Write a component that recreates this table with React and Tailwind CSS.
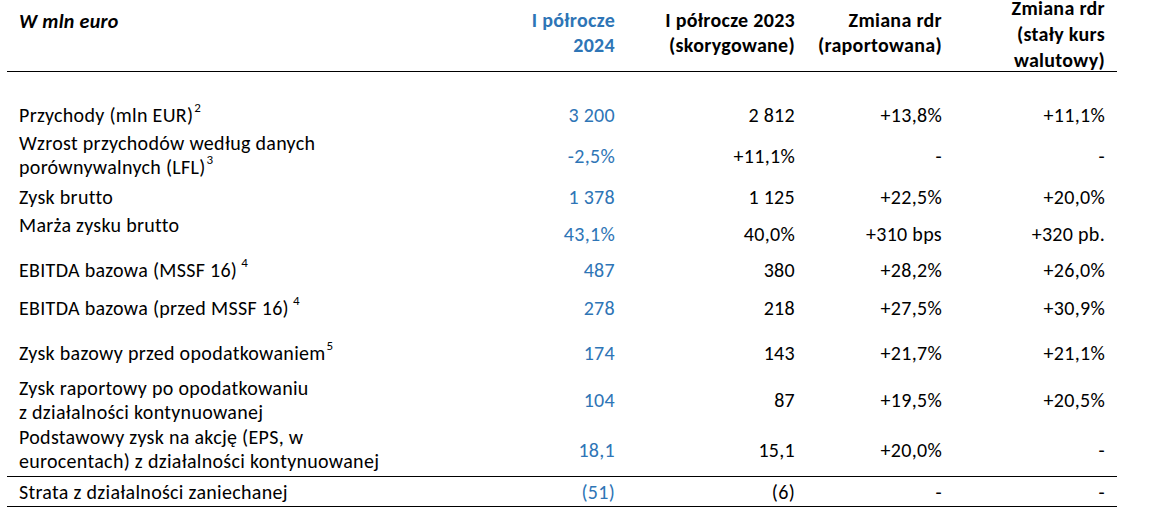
import React from "react";

const rows = [
  { label: ["Przychody (mln EUR)", "2", false], h: 28, vo: 0, v: ["3 200", "2 812", "+13,8%", "+11,1%"] },
  { label: ["Wzrost przychodów według danych", null], label2: ["porównywalnych (LFL)", "3", false], h: 54, vo: 13, v: ["-2,5%", "+11,1%", "-", "-"] },
  { label: ["Zysk brutto", null], h: 28, vo: 0, v: ["1 378", "1 125", "+22,5%", "+20,0%"] },
  { label: ["Marża zysku brutto", null], h: 45, vo: 9, v: ["43,1%", "40,0%", "+310 bps", "+320 pb."] },
  { label: ["EBITDA bazowa (MSSF 16)", "4", true], h: 38, vo: 0, v: ["487", "380", "+28,2%", "+26,0%"] },
  { label: ["EBITDA bazowa (przed MSSF 16)", "4", true], h: 45, vo: 0, v: ["278", "218", "+27,5%", "+30,9%"] },
  { label: ["Zysk bazowy przed opodatkowaniem", "5", false], h: 35, vo: 0, v: ["174", "143", "+21,7%", "+21,1%"] },
  { label: ["Zysk raportowy po opodatkowaniu", null], label2: ["z działalności kontynuowanej", null], h: 49, vo: 12, v: ["104", "87", "+19,5%", "+20,5%"] },
  { label: ["Podstawowy zysk na akcję (EPS, w", null], label2: ["eurocentach) z działalności kontynuowanej", null], h: 51, vo: 13, v: ["18,1", "15,1", "+20,0%", "-"] },
];

const cols = "grid grid-cols-[453px_167px_180px_147px_163px]";

function Label({ parts }) {
  const [text, sup, space] = parts;
  return (
    <div className="whitespace-nowrap">
      {text}
      {sup && (
        <sup className={`text-[13px] leading-none tracking-normal relative top-[-2px] align-super ${space ? "ml-[4px]" : "ml-[1px]"}`}>{sup}</sup>
      )}
    </div>
  );
}

function Row({ r }) {
  return (
    <div className={cols} style={{ height: r.h }}>
      <div className="pl-[12px]">
        <Label parts={r.label} />
        {r.label2 && <Label parts={r.label2} />}
      </div>
      {r.v.map((val, i) => (
        <div
          key={i}
          className={`pr-[12px] text-right whitespace-nowrap ${i === 0 ? "text-[#2E75B6]" : "text-black"}`}
          style={{ paddingTop: r.vo }}
        >
          {val}
        </div>
      ))}
    </div>
  );
}

export default function App() {
  return (
    <div
      className="w-[1157px] h-[507px] overflow-hidden bg-white text-black text-[20px] leading-[24px] tracking-[0.3px]"
      style={{ fontFamily: "Carlito, Lato, 'Liberation Sans', sans-serif" }}
    >
      <div className="ml-[7px] w-[1110px]">
        {/* header */}
        <div className={`${cols} grid-rows-[71px] h-[72px] border-b border-black font-bold leading-[25px] items-start`}>
          <div className="pl-[12px] pt-[9px] italic leading-[24px]">W mln euro</div>
          <div className="pr-[12px] text-right text-[#2E75B6] pt-[8px]">
            <div>I półrocze</div>
            <div>2024</div>
          </div>
          <div className="pr-[12px] text-right pt-[8px]">
            <div>I półrocze 2023</div>
            <div>(skorygowane)</div>
          </div>
          <div className="pr-[12px] text-right pt-[8px]">
            <div>Zmiana rdr</div>
            <div>(raportowana)</div>
          </div>
          <div className="pr-[12px] text-right mt-[-5px] leading-[26px] whitespace-nowrap">
            <div>Zmiana rdr</div>
            <div>(stały kurs</div>
            <div>walutowy)</div>
          </div>
        </div>
        {/* body */}
        <div className="pt-[31px] border-b border-black">
          {rows.map((r, i) => (
            <Row key={i} r={r} />
          ))}
        </div>
        <div className={`${cols} h-[30px] pt-[3px] border-b border-black`}>
          <div className="pl-[12px] whitespace-nowrap">Strata z działalności zaniechanej</div>
          <div className="pr-[12px] text-right text-[#2E75B6]">(51)</div>
          <div className="pr-[12px] text-right">(6)</div>
          <div className="pr-[12px] text-right">-</div>
          <div className="pr-[12px] text-right">-</div>
        </div>
      </div>
    </div>
  );
}
